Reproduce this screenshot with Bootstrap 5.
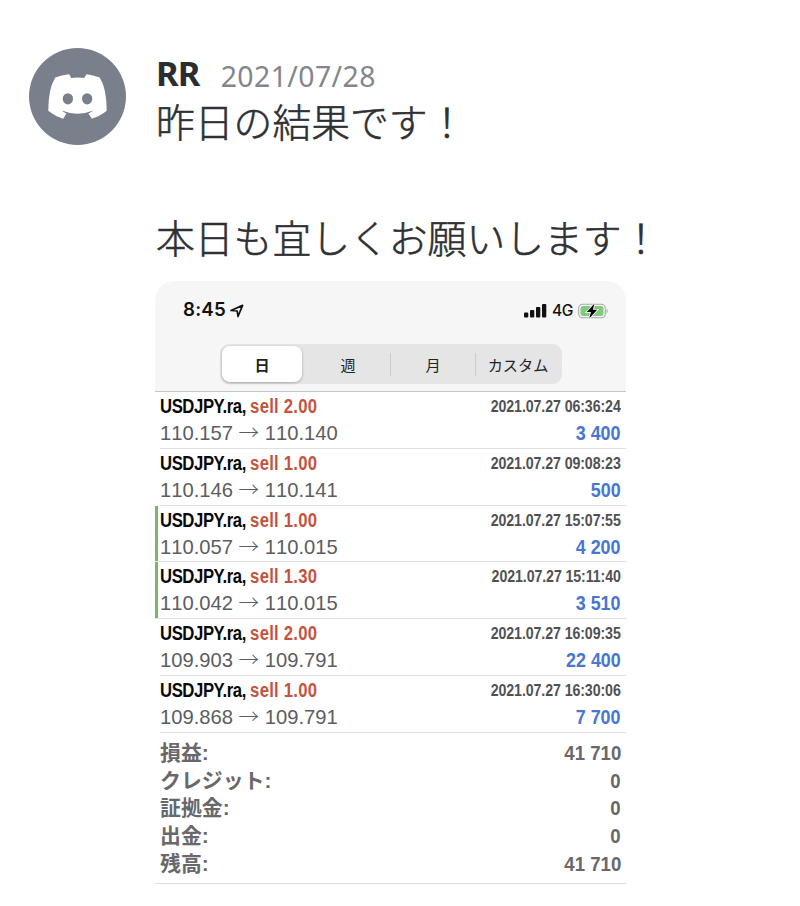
<!DOCTYPE html>
<html lang="ja">
<head>
<meta charset="utf-8">
<meta name="viewport" content="width=device-width, initial-scale=1">
<title>RR</title>
<link href="https://cdn.jsdelivr.net/npm/bootstrap@5.3.0/dist/css/bootstrap.min.css" rel="stylesheet">
<style>
body{font-family:"Liberation Sans","Noto Sans CJK JP",sans-serif;background:#fff;color:#2e3033}
.chat{padding:48px 0 0 29px}
.avatar{width:97px;height:97px}
.chat-body{margin-left:30px;padding-top:3px}
.author-line{height:44px;line-height:44px;font-family:"Noto Sans",sans-serif}
.author-name{font-size:34.5px;letter-spacing:-.8px;color:#2b2d31}
.sent-date{font-size:28.4px;letter-spacing:.42px;margin-left:21px;color:#83868c;padding-top:3px}
.msg{font-family:"Noto Sans CJK JP",sans-serif;font-size:38.8px;line-height:58px;font-weight:300;-webkit-text-stroke:.55px #2e3033;white-space:pre-line;height:182px;margin:-4px 0 0}
.shot{width:471px;border-radius:20px 20px 0 0;overflow:hidden;margin:8px 0 0 -1px}
.shot-top{height:111px;background:#f6f6f6;border-bottom:1px solid #c4c5c6}
.status{height:59px;padding:0 17px 0 28px;color:#111}
.clock{font-size:18.7px;font-family:Inter,sans-serif;font-weight:600;letter-spacing:.2px}
.net{font-size:15.6px;font-family:Inter,sans-serif;font-weight:500;letter-spacing:-.5px;margin:0 5px 0 5px}
.seg{width:342px;height:40px;margin:4px 0 0 65px;background:#e5e5e6;border-radius:9px;padding:2px;font-family:"Noto Sans CJK JP",sans-serif;font-size:15.2px;color:#222}
.seg-item{width:85.5px}
.seg-item.on{width:80px;margin-right:4px;flex:none;background:#fff;border-radius:8px;font-weight:700;box-shadow:0 1px 3px rgba(0,0,0,.28)}
.seg-line{width:1px;height:23px;background:#ccccce;flex:none}
.deal{height:56.8px;padding:1px 5px 0 0;margin-left:5px;border-bottom:1px solid #e0e0e1}
.deal.closed{margin-left:0;padding-left:5px;box-shadow:inset 3px 0 #7fb26b}
.line-a{height:27px;line-height:27px}
.line-b{height:26px;line-height:27px}
.nar{font-weight:700;display:inline-block;white-space:nowrap;transform:scaleX(.886);transform-origin:right center}
.sym{font-size:20px;color:#080808;letter-spacing:-.5px;transform:scaleX(.835);transform-origin:left center}
.sym b{color:#c4543f;letter-spacing:.3px}
.stamp{font-size:16px;color:#505052;letter-spacing:-.1px}
.gain{font-size:20.2px;color:#4876d2}
.price{font-size:20.2px;color:#5c5d60;font-kerning:none;white-space:nowrap}
.arrow{font-family:"Noto Sans CJK JP",sans-serif;font-weight:300;font-size:20.5px;line-height:1}
.totals{padding:6px 5px 0;height:151px;border-bottom:1px solid #dcdcdd;color:#68686a}
.total{height:27.8px;line-height:27.8px}
.total-name{font-weight:700;font-size:20.9px}
.total-val{font-size:21px}
</style>
</head>
<body>
<main class="chat d-flex align-items-start">
<svg class="avatar flex-shrink-0" viewBox="27 22 292 292" aria-hidden="true"><circle cx="173" cy="168" r="146" fill="#79808b"/><path fill="#fff" d="M106 111Q124 104 148 101L154 112Q173 109 193 112L200 101Q220 104 240 111Q261 145 261 211Q240 228 216 235L206 219Q214 216 220 210Q173 230 126 210Q132 216 140 219L130 235Q106 228 85 211Q85 145 106 111Z"/><ellipse cx="144" cy="175" rx="15.500" ry="17" fill="#79808b"/><ellipse cx="202" cy="175" rx="15.500" ry="17" fill="#79808b"/></svg>
<section class="chat-body">
<div class="author-line d-flex"><span class="author-name fw-bold">RR</span><span class="sent-date">2021/07/28</span></div>
<p class="msg">昨日の結果です！

本日も宜しくお願いします！</p>
<div class="shot">
<div class="shot-top">
<div class="status d-flex align-items-center">
<span class="clock">8:45</span>
<svg class="ms-1" width="14" height="14" viewBox="0 0 14 14"><path d="M1 6.500L12.600 1.400L8 12.500L7.200 7Z" fill="none" stroke="#111" stroke-width="1.700" stroke-linejoin="round"/></svg>
<svg class="ms-auto" width="23" height="14" viewBox="0 0 23 14" fill="#111"><rect x="0" y="8.500" width="4.300" height="5" rx="1"/><rect x="6" y="6" width="4.300" height="7.500" rx="1"/><rect x="12" y="3" width="4.300" height="10.500" rx="1"/><rect x="18" y="0" width="4.300" height="13.500" rx="1"/></svg>
<span class="net">4G</span>
<svg width="31" height="16" viewBox="0 0 31 16"><rect x=".7" y="1.200" width="26.600" height="13.600" rx="4" fill="#fafafa" stroke="#a5a7a5" stroke-width="1.100"/><rect x="2.500" y="3" width="23" height="10" rx="2.300" fill="#80ca7e"/><path d="M28.700 5.500q2.200 2.500 0 5z" fill="#a5a7a5"/><path d="M16.500 .5L8.800 9H13L11.200 15.500L19.200 6.800H14.800Z" fill="#000" stroke="#f6f6f6" stroke-width="1.800" paint-order="stroke"/></svg>
</div>
<div class="seg d-flex align-items-stretch">
<div class="seg-item on d-flex align-items-center justify-content-center">日</div>
<div class="seg-item d-flex align-items-center justify-content-center">週</div>
<div class="seg-line align-self-center"></div>
<div class="seg-item d-flex align-items-center justify-content-center">月</div>
<div class="seg-line align-self-center"></div>
<div class="seg-item d-flex align-items-center justify-content-center">カスタム</div>
</div>
</div>
<div class="deal"><div class="line-a d-flex justify-content-between"><span class="nar sym">USDJPY.ra, <b>sell 2.00</b></span><span class="nar stamp">2021.07.27 06:36:24</span></div><div class="line-b d-flex justify-content-between"><span class="price">110.157 <span class="arrow">→</span> 110.140</span><span class="nar gain">3 400</span></div></div>
<div class="deal"><div class="line-a d-flex justify-content-between"><span class="nar sym">USDJPY.ra, <b>sell 1.00</b></span><span class="nar stamp">2021.07.27 09:08:23</span></div><div class="line-b d-flex justify-content-between"><span class="price">110.146 <span class="arrow">→</span> 110.141</span><span class="nar gain">500</span></div></div>
<div class="deal closed"><div class="line-a d-flex justify-content-between"><span class="nar sym">USDJPY.ra, <b>sell 1.00</b></span><span class="nar stamp">2021.07.27 15:07:55</span></div><div class="line-b d-flex justify-content-between"><span class="price">110.057 <span class="arrow">→</span> 110.015</span><span class="nar gain">4 200</span></div></div>
<div class="deal closed"><div class="line-a d-flex justify-content-between"><span class="nar sym">USDJPY.ra, <b>sell 1.30</b></span><span class="nar stamp">2021.07.27 15:11:40</span></div><div class="line-b d-flex justify-content-between"><span class="price">110.042 <span class="arrow">→</span> 110.015</span><span class="nar gain">3 510</span></div></div>
<div class="deal"><div class="line-a d-flex justify-content-between"><span class="nar sym">USDJPY.ra, <b>sell 2.00</b></span><span class="nar stamp">2021.07.27 16:09:35</span></div><div class="line-b d-flex justify-content-between"><span class="price">109.903 <span class="arrow">→</span> 109.791</span><span class="nar gain">22 400</span></div></div>
<div class="deal"><div class="line-a d-flex justify-content-between"><span class="nar sym">USDJPY.ra, <b>sell 1.00</b></span><span class="nar stamp">2021.07.27 16:30:06</span></div><div class="line-b d-flex justify-content-between"><span class="price">109.868 <span class="arrow">→</span> 109.791</span><span class="nar gain">7 700</span></div></div>
<div class="totals">
<div class="total d-flex justify-content-between"><span class="total-name">損益:</span><span class="nar total-val">41 710</span></div>
<div class="total d-flex justify-content-between"><span class="total-name">クレジット:</span><span class="nar total-val">0</span></div>
<div class="total d-flex justify-content-between"><span class="total-name">証拠金:</span><span class="nar total-val">0</span></div>
<div class="total d-flex justify-content-between"><span class="total-name">出金:</span><span class="nar total-val">0</span></div>
<div class="total d-flex justify-content-between"><span class="total-name">残高:</span><span class="nar total-val">41 710</span></div>
</div>
</div>
</section>
</main>
<script src="https://cdn.jsdelivr.net/npm/bootstrap@5.3.0/dist/js/bootstrap.bundle.min.js"></script>
</body>
</html>
